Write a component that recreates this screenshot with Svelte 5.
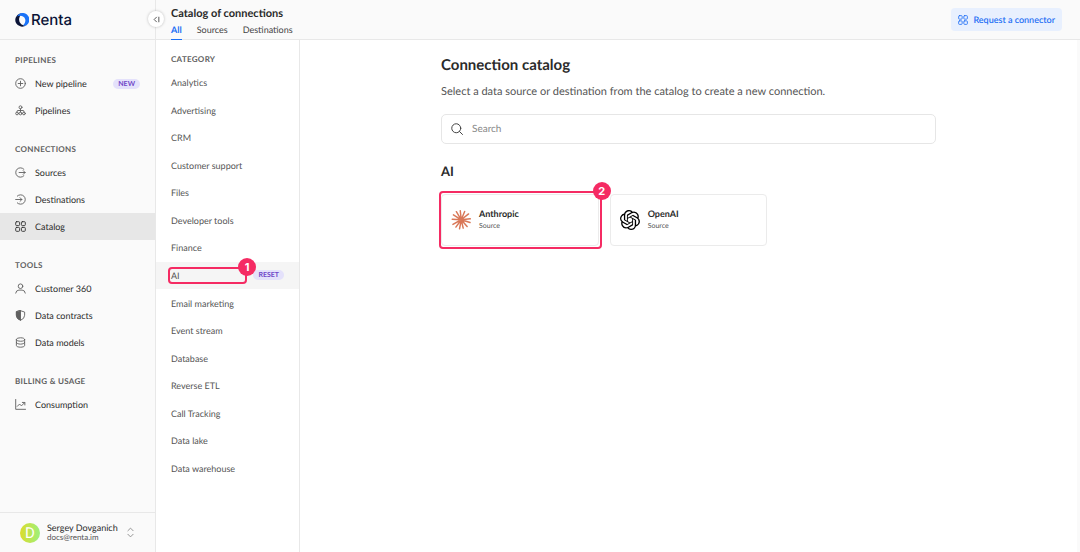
<script lang="ts">
	type Item = { label: string; icon: string; badge?: string; active?: boolean };

	const groups: { title: string; items: Item[] }[] = [
		{
			title: 'Pipelines',
			items: [
				{ label: 'New pipeline', icon: 'plus', badge: 'New' },
				{ label: 'Pipelines', icon: 'tree' }
			]
		},
		{
			title: 'Connections',
			items: [
				{ label: 'Sources', icon: 'source' },
				{ label: 'Destinations', icon: 'destination' },
				{ label: 'Catalog', icon: 'grid', active: true }
			]
		},
		{
			title: 'Tools',
			items: [
				{ label: 'Customer 360', icon: 'person' },
				{ label: 'Data contracts', icon: 'shield' },
				{ label: 'Data models', icon: 'database' }
			]
		},
		{
			title: 'Billing & usage',
			items: [{ label: 'Consumption', icon: 'chart' }]
		}
	];

	const tabs = ['All', 'Sources', 'Destinations'];
	let tab = $state('All');

	const categories = [
		'Analytics',
		'Advertising',
		'CRM',
		'Customer support',
		'Files',
		'Developer tools',
		'Finance',
		'AI',
		'Email marketing',
		'Event stream',
		'Database',
		'Reverse ETL',
		'Call Tracking',
		'Data lake',
		'Data warehouse'
	];
	let category = $state('AI');
	let query = $state('');

	const connectors = [
		{ name: 'Anthropic', kind: 'Source', marked: true },
		{ name: 'OpenAI', kind: 'Source', marked: false }
	];
</script>

{#snippet icon(name: string)}
	<svg class="icon" viewBox="0 0 24 24" aria-hidden="true">
		{#if name === 'plus'}
			<circle cx="12" cy="12" r="10.5" />
			<path d="M12 7v10M7 12h10" />
		{:else if name === 'tree'}
			<circle cx="12" cy="5" r="3.2" />
			<circle cx="4.5" cy="18.5" r="3" />
			<circle cx="12" cy="18.5" r="3" />
			<circle cx="19.5" cy="18.5" r="3" />
			<path d="M12 8.2v7.3M4.5 15.5V14q0-2 2-2h11q2 0 2 2v1.5" />
		{:else if name === 'source'}
			<path d="M19.5 5A10.3 10.3 0 1 0 19.5 19M9 12h13M18 8l4 4-4 4" />
		{:else if name === 'destination'}
			<path d="M5 4.5a10.3 10.3 0 1 1 0 15M1.5 12H15M11 8l4 4-4 4" />
		{:else if name === 'grid'}
			<rect x="1.5" y="1.5" width="8.5" height="8.5" rx="2" />
			<rect x="14" y="1.5" width="8.5" height="8.5" rx="2" />
			<rect x="1.5" y="14" width="8.5" height="8.5" rx="2" />
			<rect x="14" y="14" width="8.5" height="8.5" rx="2" />
		{:else if name === 'person'}
			<circle cx="12" cy="7" r="5" />
			<path d="M1.5 22q1-6.5 7-6.5h7q6 0 7 6.5" />
		{:else if name === 'shield'}
			<path d="M12 1.5l9 3v7q0 7.5-9 11-9-3.5-9-11v-7z" />
			<path class="solid" d="M12 1.5v21q-9-3.5-9-11v-7z" />
		{:else if name === 'database'}
			<ellipse cx="12" cy="5.5" rx="9" ry="3.8" />
			<path d="M3 5.5v13c0 5 18 5 18 0v-13M3 12c0 5 18 5 18 0" />
		{:else if name === 'chart'}
			<path d="M1.5 1v21.5H23M5 16l5-5 4 4 7-7M16 7.5h5.5V13" />
		{/if}
	</svg>
{/snippet}

<div class="app">
	<aside class="sidebar">
		<div class="brand">
			<svg class="mark" viewBox="0 0 28 28" aria-hidden="true">
				<path
					fill="#0b1437"
					d="M10 1A13.5 13.5 0 1 0 23 24Q17 26 12.5 22.5 7 18 8.5 10 9 5 14 1.5z"
				/>
				<path
					fill="#1a73f8"
					d="M10 1A13.5 13.5 0 0 1 23 24.5Q19 26 16 25 22 20 20.5 13 18.5 5.5 10 5.5 6 5.5 4 7 6 2.5 10 1z"
				/>
			</svg>
			<span>Renta</span>
			<button class="collapse" type="button" aria-label="Collapse menu">
				<svg viewBox="0 0 12 12" aria-hidden="true"><path d="M6 2L2 6l4 4M10 2v8" /></svg>
			</button>
		</div>

		<nav class="menu" aria-label="Main">
			{#each groups as group}
				<section>
					<h2 class="caption">{group.title}</h2>
					{#each group.items as item}
						<a class="item" class:active={item.active} href="#{item.icon}">
							{@render icon(item.icon)}
							<span>{item.label}</span>
							{#if item.badge}<span class="pill">{item.badge}</span>{/if}
						</a>
					{/each}
				</section>
			{/each}
		</nav>

		<button class="user" type="button">
			<span class="avatar">D</span>
			<span class="who">
				<span class="name">Sergey Dovganich</span>
				<span class="mail">docs@renta.im</span>
			</span>
			<svg class="updown" viewBox="0 0 8 12" aria-hidden="true">
				<path d="M1 4l3-3 3 3M1 8l3 3 3-3" />
			</svg>
		</button>
	</aside>

	<div class="page">
		<header class="topbar">
			<div class="heading">
				<h1>Catalog of connections</h1>
				<nav class="tabs" aria-label="Connection type">
					{#each tabs as t}
						<a href="#{t}" class:active={t === tab} onclick={() => (tab = t)}>{t}</a>
					{/each}
				</nav>
			</div>
			<button class="request" type="button">
				{@render icon('grid')}
				Request a connector
			</button>
		</header>

		<div class="body">
			<nav class="categories" aria-label="Category">
				<h2 class="caption">Category</h2>
				<ul>
					{#each categories as c}
						<li class:active={c === category}>
							<a href="#{c}" onclick={() => (category = c)}>
								{c}
								{#if c === 'AI'}
									<span class="outline"><span class="step">1</span></span>
								{/if}
							</a>
							{#if c === category}
								<button class="pill" type="button" onclick={() => (category = '')}>Reset</button>
							{/if}
						</li>
					{/each}
				</ul>
			</nav>

			<main>
				<div class="content">
					<h2 class="title">Connection catalog</h2>
					<p>Select a data source or destination from the catalog to create a new connection.</p>
					<label class="search">
						<svg viewBox="0 0 24 24" aria-hidden="true">
							<circle cx="10.5" cy="10.5" r="9" />
							<path d="M17 17l6 6" />
						</svg>
						<input type="text" placeholder="Search" aria-label="Search" bind:value={query} />
					</label>

					<h3>AI</h3>
					<div class="cards">
						{#each connectors as c}
							<a class="card" href="#{c.name}">
								{#if c.name === 'Anthropic'}
									<svg class="logo burst" viewBox="-1 0 41 41" aria-hidden="true">
										<path
											d="M20 20L18 1.5M20 20L27 3M20 20L35 8M20 20L38.5 18M20 20L38 25.5M20 20L32 34M20 20L24 37M20 20L16.5 38.5M20 20L9 35M20 20L3 29.5M20 20L1.5 19M20 20L4 10M20 20L10 3.5"
										/>
									</svg>
								{:else}
									<svg class="logo" viewBox="0 0 24 24" aria-hidden="true">
										<path
											d="M22.2819 9.8211a5.9847 5.9847 0 0 0-.5157-4.9108 6.0462 6.0462 0 0 0-6.5098-2.9A6.0651 6.0651 0 0 0 4.9807 4.1818a5.9847 5.9847 0 0 0-3.9977 2.9 6.0462 6.0462 0 0 0 .7427 7.0966 5.98 5.98 0 0 0 .511 4.9107 6.051 6.051 0 0 0 6.5146 2.9001A5.9847 5.9847 0 0 0 13.2599 24a6.0557 6.0557 0 0 0 5.7718-4.2058 5.9894 5.9894 0 0 0 3.9977-2.9001 6.0557 6.0557 0 0 0-.7475-7.0729zm-9.022 12.6081a4.4755 4.4755 0 0 1-2.8764-1.0408l.1419-.0804 4.7783-2.7582a.7948.7948 0 0 0 .3927-.6813v-6.7369l2.02 1.1686a.071.071 0 0 1 .038.052v5.5826a4.504 4.504 0 0 1-4.4945 4.4944zm-9.6607-4.1254a4.4708 4.4708 0 0 1-.5346-3.0137l.142.0852 4.783 2.7582a.7712.7712 0 0 0 .7806 0l5.8428-3.3685v2.3324a.0804.0804 0 0 1-.0332.0615L9.74 19.9502a4.4992 4.4992 0 0 1-6.1408-1.6464zM2.3408 7.8956a4.485 4.485 0 0 1 2.3655-1.9728V11.6a.7664.7664 0 0 0 .3879.6765l5.8144 3.3543-2.0201 1.1685a.0757.0757 0 0 1-.071 0l-4.8303-2.7865A4.504 4.504 0 0 1 2.3408 7.872zm16.5963 3.8558L13.1038 8.364 15.1192 7.2a.0757.0757 0 0 1 .071 0l4.8303 2.7913a4.4944 4.4944 0 0 1-.6765 8.1042v-5.6772a.79.79 0 0 0-.407-.667zm2.0107-3.0231l-.142-.0852-4.7735-2.7818a.7759.7759 0 0 0-.7854 0L9.409 9.2297V6.8974a.0662.0662 0 0 1 .0284-.0615l4.8303-2.7866a4.4992 4.4992 0 0 1 6.6802 4.66zM8.3065 12.863l-2.02-1.1638a.0804.0804 0 0 1-.038-.0567V6.0742a4.4992 4.4992 0 0 1 7.3757-3.4537l-.142.0805L8.704 5.459a.7948.7948 0 0 0-.3927.6813zm1.0976-2.3654l2.602-1.4998 2.6069 1.4998v2.9994l-2.5974 1.4997-2.6067-1.4997Z"
										/>
									</svg>
								{/if}
								<span class="about">
									<strong>{c.name}</strong>
									<small>{c.kind}</small>
								</span>
								{#if c.marked}
									<span class="outline"><span class="step">2</span></span>
								{/if}
							</a>
						{/each}
					</div>
				</div>
			</main>
		</div>
	</div>
</div>

<style>
	:global(body) {
		font-family: Lato, 'Liberation Sans', sans-serif;
		font-size: 9px;
		text-rendering: geometricPrecision;
		color: #2b2b2b;
		background: #fff;
	}
	.app {
		display: flex;
		min-height: 100vh;
	}
	.app * {
		box-sizing: border-box;
	}
	h1,
	h2,
	h3,
	p,
	ul {
		margin: 0;
		padding: 0;
	}
	a {
		color: inherit;
		text-decoration: none;
	}
	button,
	input {
		font: inherit;
		color: inherit;
		text-rendering: inherit;
		padding: 0;
		border: 0;
		background: none;
	}
	button {
		cursor: pointer;
	}
	svg {
		flex: none;
		fill: none;
		stroke: currentColor;
		stroke-linecap: round;
		stroke-linejoin: round;
	}
	.icon {
		width: 11px;
		height: 11px;
		stroke-width: 2;
	}
	.solid {
		fill: currentColor;
	}
	.caption {
		padding: 0 15px;
		font-size: 8px;
		line-height: 19px;
		font-weight: 700;
		letter-spacing: 0.3px;
		text-transform: uppercase;
		color: #606060;
	}
	.pill {
		padding: 0 5px;
		border-radius: 5px;
		font-size: 7px;
		line-height: 10px;
		font-weight: 700;
		text-transform: uppercase;
		color: #7048c8;
		background: #e4e1fb;
	}

	.sidebar {
		flex: none;
		display: flex;
		flex-direction: column;
		width: 156px;
		background: #fafafa;
		border-right: 1px solid #e8e8e8;
	}
	.brand {
		position: relative;
		display: flex;
		align-items: center;
		gap: 2px;
		height: 40px;
		padding-left: 15px;
		border-bottom: 1px solid #e8e8e8;
		font: 500 15px Inter, sans-serif;
		color: #0b1437;
	}
	.mark {
		width: 14px;
		height: 14px;
		stroke: none;
	}
	.collapse {
		position: absolute;
		top: 11px;
		right: -9px;
		display: grid;
		place-items: center;
		width: 16px;
		height: 16px;
		border-radius: 50%;
		background: #fff;
		box-shadow: 0 0 3px rgba(0, 0, 0, 0.25);
		color: #444;
	}
	.collapse svg {
		width: 7px;
		height: 7px;
		stroke-width: 1.5;
	}
	.menu {
		flex: 1;
		display: flex;
		flex-direction: column;
		gap: 16px;
		padding: 11px 0;
	}
	.item {
		display: flex;
		align-items: center;
		gap: 9px;
		height: 27px;
		padding: 0 15px;
	}
	.item .icon {
		color: #606060;
	}
	.item .pill {
		margin-left: auto;
	}
	.item.active {
		background: #e7e7e7;
	}
	.item.active .icon {
		color: #333;
	}
	.user {
		display: flex;
		align-items: center;
		height: 40px;
		padding: 0 21px 0 20px;
		border-top: 1px solid #e8e8e8;
		text-align: left;
	}
	.avatar {
		width: 20px;
		height: 20px;
		margin-right: 7px;
		border-radius: 50%;
		background: linear-gradient(90deg, #dcdc2c, #9cf07c);
		font: 400 15px/20px Roboto, sans-serif;
		text-align: center;
		color: #fff;
	}
	.who {
		display: flex;
		flex: 1;
		flex-direction: column;
		white-space: nowrap;
	}
	.name {
		line-height: 10px;
	}
	.mail {
		font-size: 8px;
		line-height: 9px;
		color: #555;
	}
	.updown {
		width: 7px;
		height: 11px;
		color: #888;
	}

	.page {
		flex: 1;
		display: flex;
		flex-direction: column;
		min-width: 0;
	}
	.topbar {
		display: flex;
		align-items: center;
		justify-content: space-between;
		height: 40px;
		padding: 0 18px 0 15px;
		background: #fafafa;
		border-bottom: 1px solid #e8e8e8;
	}
	.heading {
		align-self: flex-end;
		margin-bottom: -1px;
	}
	h1 {
		font-size: 11px;
		line-height: 13px;
		font-weight: 700;
	}
	.tabs {
		display: flex;
		gap: 15px;
	}
	.tabs a {
		height: 20px;
		line-height: 20px;
		color: #444;
	}
	.tabs a.active {
		color: #1a6ff5;
		font-weight: 700;
		border-bottom: 1px solid #1a6ff5;
	}
	.request {
		display: flex;
		align-items: center;
		gap: 5px;
		height: 23px;
		padding: 0 7px;
		border-radius: 4px;
		background: #e8f0fe;
		color: #1f6ff5;
		font-weight: 600;
	}
	.request .icon {
		width: 10px;
		height: 10px;
	}
	.body {
		flex: 1;
		display: flex;
	}
	.categories {
		flex: none;
		width: 144px;
		padding-top: 10px;
		border-right: 1px solid #e8e8e8;
	}
	.categories ul {
		display: grid;
		grid-auto-rows: 1fr;
		min-height: 413px;
		list-style: none;
	}
	.categories li {
		display: flex;
		align-items: center;
		justify-content: space-between;
		padding: 0 15px;
		color: #555;
	}
	.categories li.active {
		background: #f5f5f5;
	}
	.categories li a {
		position: relative;
		min-width: 73px;
	}
	.outline {
		position: absolute;
		inset: -3px;
		border: 2px solid #f52b63;
		border-radius: 4px;
	}
	.step {
		position: absolute;
		top: -11px;
		right: -11px;
		width: 18px;
		height: 18px;
		border-radius: 50%;
		background: #f52b63;
		color: #fff;
		font: 700 11px/18px Inter, sans-serif;
		text-align: center;
	}

	main {
		flex: 1;
		padding: 15px 20px;
		border-right: 3px solid #fafafa;
	}
	.content {
		max-width: 495px;
		margin: 0 auto;
	}
	.title {
		font-size: 15px;
		line-height: 20px;
		font-weight: 700;
	}
	p {
		padding: 9px 0 14px;
		font-size: 11px;
		line-height: 16px;
		color: #555;
	}
	.search {
		display: flex;
		align-items: center;
		gap: 9px;
		height: 30px;
		padding: 0 9px;
		border: 1px solid #e6e6e6;
		border-radius: 5px;
	}
	.search svg {
		width: 12px;
		height: 12px;
		stroke-width: 2;
		color: #444;
	}
	.search input {
		flex: 1;
		font-size: 10px;
		outline: none;
	}
	.search input::placeholder {
		color: #888;
	}
	h3 {
		padding: 19px 0 14px;
		font-size: 13px;
		line-height: 17px;
		font-weight: 700;
	}
	.cards {
		display: grid;
		grid-template-columns: repeat(3, 1fr);
		gap: 11px;
	}
	.card {
		position: relative;
		display: flex;
		align-items: center;
		gap: 8px;
		height: 52px;
		padding: 0 9px;
		border: 1px solid #ebebeb;
		border-radius: 4px;
	}
	.card .outline {
		inset: -4px;
		left: -3px;
	}
	.logo {
		width: 20px;
		height: 20px;
		fill: #000;
		stroke: none;
	}
	.burst {
		stroke: #d97757;
		stroke-width: 3;
	}
	.about {
		display: flex;
		flex-direction: column;
	}
	.about strong {
		line-height: 13px;
		font-weight: 700;
	}
	.about small {
		font-size: 7px;
		line-height: 13px;
		color: #555;
	}
</style>
